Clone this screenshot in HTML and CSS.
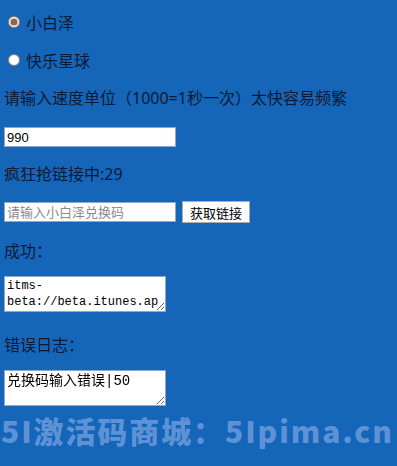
FILE: index.html
```html
<!DOCTYPE html>
<html lang="zh">

<head>
    <meta charset="UTF-8">
    <meta name="viewport" content="width=device-width, initial-scale=1.0">
    <title>小白泽</title>
    <link rel="stylesheet" href="styles.css">
</head>

<body>
    <div id="container">
        <label class="radioRow">
            <input type="radio" name="app" checked> 小白泽
        </label>
        <label class="radioRow">
            <input type="radio" name="app"> 快乐星球
        </label>

        <div class="line">请输入速度单位（1000=1秒一次）太快容易频繁</div>
        <input type="text" class="field speed" value="990">

        <div class="line status">疯狂抢链接中:29</div>
        <div class="codeRow">
            <input type="text" class="field" placeholder="请输入小白泽兑换码">
            <button class="btn">获取链接</button>
        </div>

        <div class="line result">成功：</div>
        <textarea class="box scroll">itms-beta://beta.itunes.apple.com/v1/app/xxxx</textarea>

        <div class="line errLabel">错误日志：</div>
        <textarea class="box errBox">兑换码输入错误|50</textarea>
    </div>

    <div class="mark">5I激活码商城：5Ipima.cn</div>
</body>

</html>
```

FILE: styles.css
```css
body {
    margin: 0;
    padding: 11px 4px 0;
    background: #1565b8;
    color: #0c1a36;
    font-family: "Noto Sans", "Noto Sans CJK SC", sans-serif;
    font-size: 16px;
    height: 466px;
    box-sizing: border-box;
    overflow: hidden;
    position: relative;
}

#container {
    display: flex;
    flex-direction: column;
    align-items: flex-start;
}

.radioRow {
    display: flex;
    align-items: center;
    height: 22px;
    margin-bottom: 16px;
}

.radioRow input {
    width: 12px;
    height: 12px;
    margin: 0 6px 0 4px;
    accent-color: #8a6a55;
}

.line {
    height: 22px;
    line-height: 22px;
}

.field {
    width: 172px;
    height: 20px;
    box-sizing: border-box;
    border: 1px solid #8fa7c8;
    padding: 0 2px;
    font-family: "Liberation Sans", "Noto Sans CJK SC", sans-serif;
    font-size: 13px;
    color: #000;
    margin: 0;
}

.field::placeholder {
    color: #8a8a8a;
}

.speed {
    margin-top: 18px;
    margin-bottom: 16px;
}

.codeRow {
    display: flex;
    align-items: center;
    gap: 6px;
    margin-top: 16px;
    height: 22px;
}

.btn {
    height: 22px;
    padding: 0 7px;
    background: #fdfdfd;
    border: 1px solid #adadad;
    font-family: "Noto Sans CJK SC", sans-serif;
    font-size: 13px;
    color: #000;
    margin: 0;
}

.result {
    margin-top: 17px;
}

.box {
    width: 162px;
    height: 36px;
    box-sizing: border-box;
    margin: 14px 0 0;
    padding: 1px 2px;
    border: 1px solid #8fa7c8;
    font-family: "Liberation Mono", "Noto Sans CJK SC", monospace;
    font-size: 12px;
    line-height: 16px;
    color: #000;
    resize: both;
}

.scroll {
    overflow-y: scroll;
}

.errBox {
    font-size: 14px;
    padding-top: 2px;
}

.errLabel {
    margin-top: 22px;
}

.mark {
    position: absolute;
    left: 1px;
    top: 408px;
    width: 396px;
    white-space: nowrap;
    font-family: "Noto Sans CJK SC", sans-serif;
    font-weight: 900;
    font-size: 30px;
    letter-spacing: 1.9px;
    color: #5d93d6;
}
```
